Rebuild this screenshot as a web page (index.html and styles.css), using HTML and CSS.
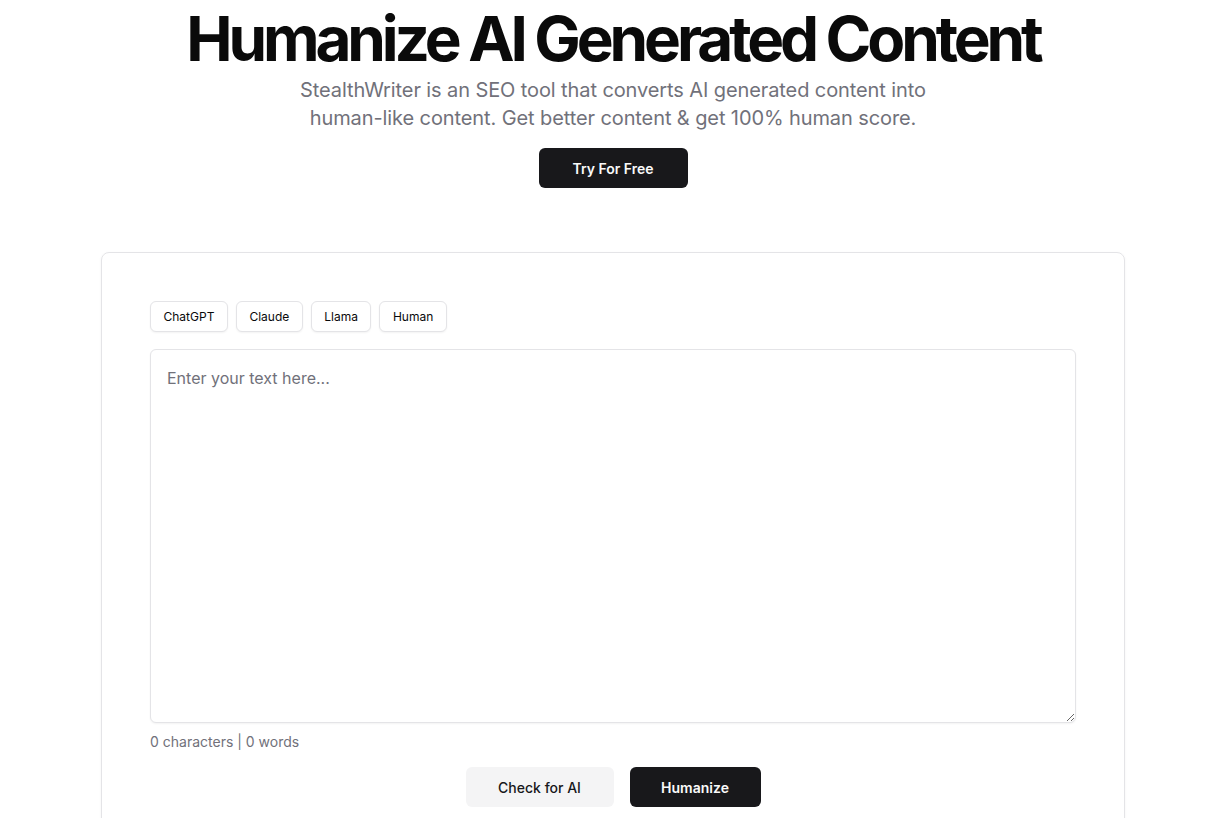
FILE: index.html
```html
<!DOCTYPE html>
<html lang="en">
<head>
<meta charset="utf-8">
<title>Humanize AI Generated Content</title>
<link rel="stylesheet" href="styles.css">
</head>
<body>
<main class="page">
  <section class="hero">
    <h1 class="title">Humanize AI Generated Content</h1>
    <p class="subtitle">StealthWriter is an SEO tool that converts AI generated content into human-like content. Get better content &amp; get 100% human score.</p>
    <a class="btn btn-dark btn-hero" href="#">Try For Free</a>
  </section>
  <section class="card">
    <div class="tabs">
      <button class="tab">ChatGPT</button>
      <button class="tab">Claude</button>
      <button class="tab">Llama</button>
      <button class="tab">Human</button>
    </div>
    <textarea class="editor" placeholder="Enter your text here..."></textarea>
    <div class="counter">0 characters | 0 words</div>
    <div class="actions">
      <button class="btn btn-light btn-check">Check for AI</button>
      <button class="btn btn-dark btn-humanize">Humanize</button>
    </div>
  </section>
</main>
</body>
</html>
```
FILE: styles.css
```css
* { box-sizing: border-box; }
html, body { margin: 0; padding: 0; background: #ffffff; }
body {
  font-family: Inter, "Noto Sans", sans-serif;
  color: #09090b;
  padding-left: 10px;
  overflow: hidden;
}
.page {
  width: 1024px;
  margin: 0 auto;
}
.hero {
  display: flex;
  flex-direction: column;
  align-items: center;
  text-align: center;
}
.title {
  margin: 0;
  padding-top: 7px;
  font-size: 62px;
  line-height: 64px;
  font-weight: 700;
  letter-spacing: -0.066em;
  color: #0a0a0a;
  white-space: nowrap;
}
.subtitle {
  margin: 5px 0 0;
  width: 640px;
  font-size: 20px;
  line-height: 28px;
  letter-spacing: -0.005em;
  color: #71717a;
}
.btn {
  display: inline-flex;
  align-items: center;
  justify-content: center;
  height: 40px;
  border: none;
  border-radius: 6px;
  font-family: Inter, "Noto Sans", sans-serif;
  font-size: 14px;
  font-weight: 600;
  text-decoration: none;
  cursor: pointer;
}
.btn-dark { background: #18181b; color: #fafafa; }
.btn-light { background: #f4f4f5; color: #18181b; font-weight: 500; }
.btn-hero { margin-top: 16px; width: 149px; }
.card {
  margin-top: 64px;
  border: 1px solid #e4e4e7;
  border-radius: 8px;
  padding: 48px 48px 40px;
  box-shadow: 0 1px 3px rgba(0,0,0,0.05);
}
.tabs {
  display: flex;
  gap: 8px;
}
.tab {
  height: 31px;
  padding: 0 12.5px;
  border: 1px solid #e4e4e7;
  border-radius: 6px;
  background: #fff;
  font-family: Inter, "Noto Sans", sans-serif;
  font-size: 12px;
  color: #09090b;
  box-shadow: 0 1px 2px rgba(0,0,0,0.05);
}
.editor {
  display: block;
  margin-top: 17px;
  width: 100%;
  height: 374px;
  padding: 16px;
  border: 1px solid #e4e4e7;
  border-radius: 6px;
  font-family: Inter, "Noto Sans", sans-serif;
  font-size: 16px;
  line-height: 24px;
  color: #09090b;
  box-shadow: 0 1px 2px rgba(0,0,0,0.05);
  outline: none;
}
.editor::placeholder { color: #71717a; }
.counter {
  margin-top: 9px;
  font-size: 14px;
  line-height: 20px;
  color: #71717a;
}
.actions {
  display: flex;
  justify-content: center;
  gap: 16px;
  margin-top: 15px;
}
.btn-check { width: 148px; }
.btn-humanize { width: 131px; }
```
